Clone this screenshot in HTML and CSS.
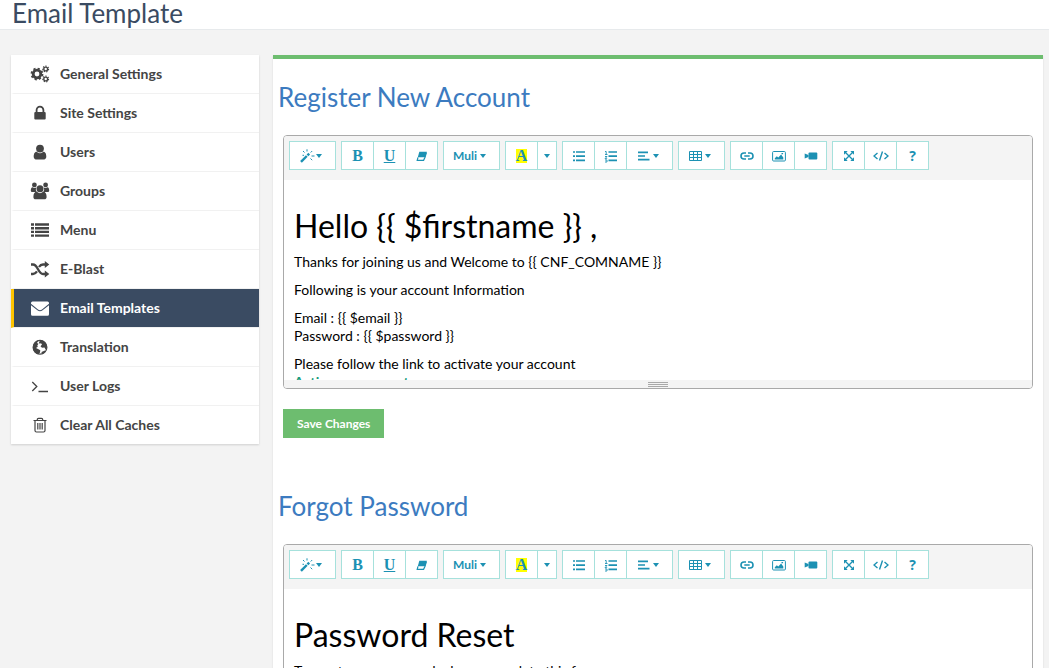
FILE: index.html
```
<!DOCTYPE html>
<html lang="en">
<head>
<meta charset="utf-8">
<title>Email Template</title>
<link rel="stylesheet" href="styles.css">
</head>
<body>
<svg class="sprite" aria-hidden="true">
  <symbol id="cogs" viewBox="0 0 20 20">
    <g fill="none" stroke="currentColor">
      <circle cx="7" cy="10" r="3.8" stroke-width="2.8"/>
      <circle cx="7" cy="10" r="5.5" stroke-width="1.8" stroke-dasharray="2.16 2.16"/>
      <circle cx="15.7" cy="5" r="1.9" stroke-width="1.4"/>
      <circle cx="15.7" cy="5" r="2.9" stroke-width="1.1" stroke-dasharray="1.3 1.3"/>
      <circle cx="15.7" cy="15" r="1.9" stroke-width="1.4"/>
      <circle cx="15.7" cy="15" r="2.9" stroke-width="1.1" stroke-dasharray="1.3 1.3"/>
    </g>
  </symbol>
  <symbol id="lock" viewBox="0 0 20 20">
    <path fill="none" stroke="currentColor" stroke-width="1.8" d="M6.6 10V7a3.4 3.4 0 0 1 6.8 0v3"/>
    <rect x="4.3" y="9" width="11.4" height="7.6" rx="1" fill="currentColor"/>
  </symbol>
  <symbol id="user" viewBox="0 0 20 20">
    <circle cx="10" cy="6.6" r="3.9" fill="currentColor"/>
    <path fill="currentColor" d="M6.700 9.800a4.800 4.800 0 0 0 6.600 0c2.300 0 3 2.500 3 5 0 1.500-.9 2.600-2.200 2.600H5.900c-1.300 0-2.200-1.100-2.200-2.600 0-2.500.7-5 3-5z"/>
  </symbol>
  <symbol id="group" viewBox="0 0 20 20">
    <g fill="currentColor">
      <circle cx="4.400" cy="3.900" r="2.400"/><circle cx="15.600" cy="3.900" r="2.400"/>
      <path d="M2.700 6.300a3.600 3.600 0 0 0 3.500.3A4.500 4.500 0 0 0 6.700 11H2.600C1.500 11 .8 10.500.8 9.500c0-1.700.5-3.200 1.900-3.200zM17.300 6.300a3.600 3.600 0 0 1-3.500.3 4.500 4.500 0 0 1-.5 4.400h4.100c1.100 0 1.800-.5 1.800-1.500 0-1.700-.5-3.200-1.900-3.200z"/>
      <circle cx="10" cy="7.800" r="3.500"/>
      <path d="M6.900 10.800a4.600 4.600 0 0 0 6.200 0c2.500 0 3.500 2 3.500 5.100 0 1.400-.9 2.300-2.300 2.300H5.700c-1.400 0-2.300-.9-2.300-2.300 0-3.100 1-5.100 3.500-5.100z"/>
    </g>
  </symbol>
  <symbol id="list" viewBox="0 0 20 20">
    <path stroke="currentColor" stroke-width="2.400" d="M1 4.500h3M5 4.500h14M1 8.200h3M5 8.200h14M1 11.900h3M5 11.900h14M1 15.600h3M5 15.600h14"/>
  </symbol>
  <symbol id="shuffle" viewBox="0 0 20 20">
    <path fill="none" stroke="currentColor" stroke-width="2.300" d="M1 5.500h2c5 0 5 9.500 10 9.500h3M1 15h2c1.800 0 3-1.100 4-2.600M9 8c1-1.600 2.200-2.500 4-2.500h3"/>
    <path fill="currentColor" d="M14.800 2l4.500 3.500-4.500 3.500zM14.800 11.500l4.500 3.500-4.500 3.500z"/>
  </symbol>
  <symbol id="mail" viewBox="0 0 20 20">
    <path fill="currentColor" d="M2.500 3.500h15A1.500 1.500 0 0 1 19 5v.8l-7 5.600c-1.300 1-2.700 1-4 0L1 5.800V5a1.500 1.500 0 0 1 1.500-1.500zM1 7.200l6.400 5c1.700 1.300 3.500 1.300 5.200 0L19 7.200v9.100a1.500 1.500 0 0 1-1.500 1.500h-15A1.500 1.500 0 0 1 1 16.300z"/>
  </symbol>
  <symbol id="globe" viewBox="0 0 20 20">
    <circle cx="10" cy="10.300" r="6.900" fill="none" stroke="currentColor" stroke-width="1.200"/>
    <path fill="currentColor" d="M8.500 3.500L7 6l1.500.8L7.300 8.500l.5 1.300L6 11l2.500 1.300 1.800 1-.3 2.200-1.500 1.700C5 16.800 3 14 3 10.500 3 7 5.300 4.200 8.500 3.500zM10 3.300c3.800 0 7 3.200 7 7l-1.300 2.500-1.200-2.300-2.500.3-1.500-1.500L12 7.500l-1-1.200-1.500.5L9 5.500zM11.500 15l3.500-1.500.8.700c-.9 1.600-2.300 2.600-4 3z"/>
  </symbol>
  <symbol id="prompt" viewBox="0 0 20 20">
    <path fill="none" stroke="currentColor" stroke-width="1.300" d="M2.300 6l4.500 4.500L2.300 15M8.500 15.500H18"/>
  </symbol>
  <symbol id="trash" viewBox="0 0 20 20">
    <path fill="none" stroke="currentColor" stroke-width="1.200" d="M3.500 5.500h13M7.300 5.500v-1a1.200 1.200 0 0 1 1.200-1.200h3a1.200 1.200 0 0 1 1.200 1.200v1M5 5.500v10a1.500 1.500 0 0 0 1.500 1.500h7a1.500 1.500 0 0 0 1.500-1.500v-10M7.800 8v6.500M10 8v6.500M12.200 8v6.500"/>
  </symbol>
  <symbol id="wand" viewBox="0 0 16 14">
    <path stroke="currentColor" stroke-width="2.400" d="M1 12.800l5.800-5.800"/><path stroke="currentColor" stroke-width="2.400" d="M7.500 6.300l1.700-1.700"/>
    <path stroke="currentColor" stroke-width="1" d="M7 .3v2.200M3 2l1.500 1.500M10.700 3.500L12.200 2M11.500 7h3M10.500 9.500l1.700 1.700M2.500 6.300h1.500"/>
  </symbol>
  <symbol id="eraser" viewBox="0 0 14 14">
    <path fill="currentColor" d="M4.300 2.800h7.500l-1.500 5.500H2.800z"/><path fill="none" stroke="currentColor" stroke-width="1.200" d="M3 8.300l-.8 3h6.400l1.300-2.800 1.500-5"/>
  </symbol>
  <symbol id="bullets" viewBox="0 0 14 14">
    <path stroke="currentColor" stroke-width="1.700" d="M1 3h2M4 3h9M1 7.200h2M4 7.200h9M1 11.400h2M4 11.400h9"/>
  </symbol>
  <symbol id="numbers" viewBox="0 0 14 14">
    <path stroke="currentColor" stroke-width="1.700" d="M4.500 3H13M4.500 7.200H13M4.500 11.400H13"/>
    <path fill="none" stroke="currentColor" stroke-width=".9" d="M1 2.500h1.200v3M1 5.500h2.500M1 7.500h2L1 9.700h2.200M1 11h2v2H1"/>
  </symbol>
  <symbol id="align" viewBox="0 0 14 14">
    <path stroke="currentColor" stroke-width="1.700" d="M1 3.300h10M1 7h7M1 10.700h11.500"/>
  </symbol>
  <symbol id="grid" viewBox="0 0 14 14">
    <path fill="none" stroke="currentColor" d="M.5 2.500h12v9H.5zM.5 5.500h12M.5 8.500h12M4.500 2.500v9M8.500 2.500v9"/>
  </symbol>
  <symbol id="link" viewBox="0 0 14 14">
    <path fill="none" stroke="currentColor" stroke-width="1.600" d="M6 4H4a3 3 0 0 0 0 6h2M8 4h2a3 3 0 0 1 0 6H8M4.300 7h5.400"/>
  </symbol>
  <symbol id="picture" viewBox="0 0 14 14">
    <rect x=".6" y="2.500" width="12.800" height="9.500" rx="1" fill="none" stroke="currentColor"/>
    <path fill="currentColor" d="M2.800 10.500V9.200l2-2 1.500 1.300 2.800-3 2.200 3v2zM9.500 4h1.600v1.300H9.500z"/>
  </symbol>
  <symbol id="video" viewBox="0 0 14 14">
    <rect x="4.500" y="3.500" width="8.800" height="7" rx="1" fill="currentColor"/><path fill="currentColor" d="M.7 4.500L4.500 6v2L.7 9.500z"/>
  </symbol>
  <symbol id="expand" viewBox="0 0 14 14">
    <path stroke="currentColor" stroke-width="1.300" d="M3 3l8 8M11 3l-8 8"/>
    <path fill="currentColor" d="M2 2h3.700L2 5.700zM12 2v3.700L8.300 2zM2 12V8.300L5.700 12zM12 12H8.300L12 8.300z"/>
  </symbol>
  <symbol id="code" viewBox="0 0 16 14">
    <path fill="none" stroke="currentColor" stroke-width="1.400" d="M4.500 4L1 7l3.500 3M11.500 4L15 7l-3.500 3M9.500 2.500l-3 9"/>
  </symbol>
</svg>

<header class="page-header"><h1 class="page-title">Email Template</h1></header>

<div class="layout">
  <nav class="sidebar">
    <a class="item" href="#"><svg class="item-icon"><use href="#cogs"/></svg>General Settings</a>
    <a class="item" href="#"><svg class="item-icon"><use href="#lock"/></svg>Site Settings</a>
    <a class="item" href="#"><svg class="item-icon"><use href="#user"/></svg>Users</a>
    <a class="item" href="#"><svg class="item-icon"><use href="#group"/></svg>Groups</a>
    <a class="item" href="#"><svg class="item-icon"><use href="#list"/></svg>Menu</a>
    <a class="item" href="#"><svg class="item-icon"><use href="#shuffle"/></svg>E-Blast</a>
    <a class="item active" href="#"><svg class="item-icon"><use href="#mail"/></svg>Email Templates</a>
    <a class="item" href="#"><svg class="item-icon"><use href="#globe"/></svg>Translation</a>
    <a class="item" href="#"><svg class="item-icon"><use href="#prompt"/></svg>User Logs</a>
    <a class="item" href="#"><svg class="item-icon"><use href="#trash"/></svg>Clear All Caches</a>
  </nav>

  <main class="panel">
    <section class="template">
      <h2 class="section-title">Register New Account</h2>
      <div class="editor">
        <div class="toolbar">
          <div class="group"><button class="tool wide tight" aria-label="Style"><svg class="glyph-wide"><use href="#wand"/></svg><i class="caret"></i></button></div>
          <div class="group"><button class="tool letter">B</button><button class="tool letter underline">U</button><button class="tool" aria-label="Remove style"><svg class="glyph"><use href="#eraser"/></svg></button></div>
          <div class="group"><button class="tool font">Muli<i class="caret"></i></button></div>
          <div class="group"><button class="tool letter"><span class="mark">A</span></button><button class="tool narrow" aria-label="More colors"><i class="caret"></i></button></div>
          <div class="group"><button class="tool" aria-label="Bulleted list"><svg class="glyph"><use href="#bullets"/></svg></button><button class="tool" aria-label="Numbered list"><svg class="glyph"><use href="#numbers"/></svg></button><button class="tool wide" aria-label="Paragraph"><svg class="glyph"><use href="#align"/></svg><i class="caret"></i></button></div>
          <div class="group"><button class="tool wide" aria-label="Table"><svg class="glyph"><use href="#grid"/></svg><i class="caret"></i></button></div>
          <div class="group"><button class="tool" aria-label="Link"><svg class="glyph"><use href="#link"/></svg></button><button class="tool" aria-label="Picture"><svg class="glyph"><use href="#picture"/></svg></button><button class="tool" aria-label="Video"><svg class="glyph"><use href="#video"/></svg></button></div>
          <div class="group"><button class="tool" aria-label="Full screen"><svg class="glyph"><use href="#expand"/></svg></button><button class="tool" aria-label="Code view"><svg class="glyph-wide"><use href="#code"/></svg></button><button class="tool help">?</button></div>
        </div>
        <div class="editable" contenteditable="true">
          <h1 class="mail-title">Hello {{ $firstname }} ,</h1>
          <p class="mail-text">Thanks for joining us and Welcome to {{ CNF_COMNAME }}</p>
          <p class="mail-text">Following is your account Information</p>
          <p class="mail-text">Email : {{ $email }}<br>Password : {{ $password }}</p>
          <p class="mail-text">Please follow the link to activate your account<br><a class="mail-link" href="#">Active my account</a></p>
        </div>
        <div class="resizer"><span class="grip"></span></div>
      </div>
      <button class="save">Save Changes</button>
    </section>

    <section class="template">
      <h2 class="section-title">Forgot Password</h2>
      <div class="editor">
        <div class="toolbar">
          <div class="group"><button class="tool wide tight" aria-label="Style"><svg class="glyph-wide"><use href="#wand"/></svg><i class="caret"></i></button></div>
          <div class="group"><button class="tool letter">B</button><button class="tool letter underline">U</button><button class="tool" aria-label="Remove style"><svg class="glyph"><use href="#eraser"/></svg></button></div>
          <div class="group"><button class="tool font">Muli<i class="caret"></i></button></div>
          <div class="group"><button class="tool letter"><span class="mark">A</span></button><button class="tool narrow" aria-label="More colors"><i class="caret"></i></button></div>
          <div class="group"><button class="tool" aria-label="Bulleted list"><svg class="glyph"><use href="#bullets"/></svg></button><button class="tool" aria-label="Numbered list"><svg class="glyph"><use href="#numbers"/></svg></button><button class="tool wide" aria-label="Paragraph"><svg class="glyph"><use href="#align"/></svg><i class="caret"></i></button></div>
          <div class="group"><button class="tool wide" aria-label="Table"><svg class="glyph"><use href="#grid"/></svg><i class="caret"></i></button></div>
          <div class="group"><button class="tool" aria-label="Link"><svg class="glyph"><use href="#link"/></svg></button><button class="tool" aria-label="Picture"><svg class="glyph"><use href="#picture"/></svg></button><button class="tool" aria-label="Video"><svg class="glyph"><use href="#video"/></svg></button></div>
          <div class="group"><button class="tool" aria-label="Full screen"><svg class="glyph"><use href="#expand"/></svg></button><button class="tool" aria-label="Code view"><svg class="glyph-wide"><use href="#code"/></svg></button><button class="tool help">?</button></div>
        </div>
        <div class="editable" contenteditable="true">
          <h1 class="mail-title">Password Reset</h1>
          <p class="mail-text">To reset your password, please complete this form</p>
        </div>
        <div class="resizer"><span class="grip"></span></div>
      </div>
      <button class="save">Save Changes</button>
    </section>
  </main>
</div>
</body>
</html>
```
FILE: styles.css
```
* { box-sizing: border-box; }
body {
  margin: 0;
  background: #f3f3f3;
  color: #000;
  font: 14px/18px Lato, "Open Sans", sans-serif;
}
html { scrollbar-width: none; }
h1, h2, p { margin: 0; font-weight: 400; }
button { font-family: inherit; cursor: pointer; }
.sprite { display: none; }

.page-header {
  height: 30px;
  padding: 0 12px;
  background: #fff;
  border-bottom: 1px solid #e7eaec;
}
.page-title { font-size: 26px; line-height: 26px; color: #3a4b62; }

.layout {
  display: grid;
  grid-template-columns: 248px 1fr;
  gap: 14px;
  align-items: start;
  padding: 25px 6px 0 11px;
}

.sidebar { background: #fff; box-shadow: 0 1px 2px rgba(0, 0, 0, .15); }
.item {
  display: flex;
  align-items: center;
  gap: 10px;
  height: 39px;
  padding-left: 16px;
  border-left: 3px solid transparent;
  border-bottom: 1px solid #f1f1f1;
  color: #444;
  font-size: 14px;
  font-weight: 700;
  text-decoration: none;
}
.item:last-child { height: 38px; border-bottom: 0; }
.item.active { background: #3a4b62; color: #fff; border-left-color: #ffc400; }
.item-icon { width: 20px; height: 20px; }

.panel {
  background: #fff;
  border-top: 4px solid #6dbd6f;
  box-shadow: 0 1px 2px rgba(0, 0, 0, .1);
  padding: 24px 10px 0;
}
.template { padding-bottom: 54px; }
.section-title {
  margin: 0 -5px 24px;
  font-size: 26px;
  line-height: 28px;
  color: #3c7bc0;
}

.editor {
  border: 1px solid #a9a9a9;
  border-radius: 4px;
  overflow: hidden;
  margin-bottom: 20px;
}
.toolbar {
  display: flex;
  gap: 5px;
  padding: 5px 5px 10px;
  background: #f4f4f4;
}
.group { display: flex; }
.tool {
  display: flex;
  align-items: center;
  justify-content: center;
  gap: 2px;
  width: 33px;
  height: 29px;
  padding: 0;
  background: #fff;
  border: 1px solid #a6e1dc;
  color: #1c91b3;
}
.tool + .tool { margin-left: -1px; }
.wide { width: 47px; padding-right: 4px; }
.tight { gap: 0; }
.narrow { width: 20px; }
.font { width: 57px; gap: 3px; padding-right: 4px; font-size: 12px; font-weight: 700; }
.letter { font: 700 16px/14px "Liberation Serif", serif; }
.underline { text-decoration: underline; }
.help { font: 700 14px/14px "Open Sans", sans-serif; }
.mark { background: #ff0; }
.glyph { width: 14px; height: 14px; }
.glyph-wide { width: 16px; height: 14px; }
.caret {
  border: 3px solid transparent;
  border-top: 4px solid;
  border-bottom: 0;
}

.editable { height: 200px; padding: 10px; overflow: hidden; outline: 0; }
.mail-title { margin: 20px 0 11px; font-size: 32px; line-height: 32px; }
.mail-text { margin-bottom: 10px; }
.mail-link { color: #1a9c7c; font-weight: 700; text-decoration: none; }
.resizer { display: flex; justify-content: center; height: 8px; background: #f4f4f4; }
.grip {
  width: 20px;
  height: 7px;
  margin-top: 1px;
  background: repeating-linear-gradient(#f4f4f4 0 1px, #a9a9a9 1px 2px);
}

.save {
  display: block;
  padding: 0 14px;
  height: 29px;
  background: #6dbd6f;
  border: 0;
  color: #fff;
  font-size: 12px;
  font-weight: 700;
}
```
